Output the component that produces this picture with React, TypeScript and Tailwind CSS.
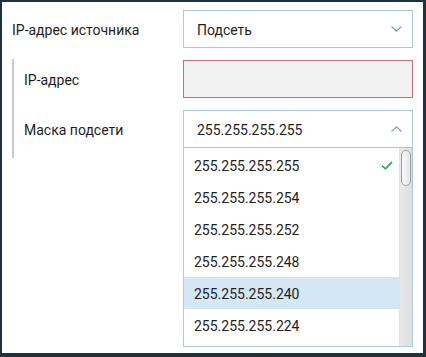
import React from "react";

const MASKS = [
  "255.255.255.255",
  "255.255.255.254",
  "255.255.255.252",
  "255.255.255.248",
  "255.255.255.240",
  "255.255.255.224",
];

function Chevron({ up }: { up?: boolean }) {
  return (
    <svg width="11" height="6" viewBox="0 0 11 6" className="shrink-0">
      <path
        d={up ? "M0.5 5.5 L5.5 0.8 L10.5 5.5" : "M0.5 0.5 L5.5 5.2 L10.5 0.5"}
        fill="none"
        stroke="#8ba5b6"
        strokeWidth="1.2"
      />
    </svg>
  );
}

function Check() {
  return (
    <svg width="12" height="9" viewBox="0 0 12 9" className="shrink-0">
      <path d="M1 4.6 L4.4 7.8 L11 1" fill="none" stroke="#3ea46d" strokeWidth="1.8" />
    </svg>
  );
}

export default function App() {
  const selected = 0;
  const hovered = 4;

  return (
    <div className="w-[426px] h-[357px] overflow-hidden bg-white border-[#1c3242] border-t-2 border-l-2 border-r-[3px] border-b-4 font-[Roboto,sans-serif] text-[14px] text-[#1e1e1e]">
      <div className="flex flex-col pt-2 pl-[10px]">
        {/* source */}
        <div className="flex items-center">
          <div className="w-[171px] pt-[2px]">IP-адрес источника</div>
          <div className="w-[230px] h-[38px] border border-[#a8c9db] flex items-center justify-between pl-[13px] pr-[10px]">
            <span className="pt-[2px]">Подсеть</span>
            <Chevron />
          </div>
        </div>

        {/* subnet group */}
        <div className="mt-[11px] border-l-2 border-[#cbcbcb] pl-[10px] pt-px pb-[10px] flex flex-col gap-3">
          <div className="flex items-center">
            <div className="w-[159px] pt-[2px]">IP-адрес</div>
            <div className="w-[230px] h-[38px] border border-[#da6573] bg-[#f2f2f2]" />
          </div>

          <div className="flex items-center">
            <div className="w-[159px] pt-[2px]">Маска подсети</div>
            <div className="relative w-[230px] h-[38px] border border-[#a8c9db] flex items-center justify-between pl-[13px] pr-[10px]">
              <span className="pt-[2px]">255.255.255.255</span>
              <Chevron up />

              <div className="absolute top-[37px] left-[-1px] w-[230px] h-[199px] bg-white border-x border-b border-[#a8c9db] flex overflow-hidden z-10">
                <div className="flex-1 flex flex-col pt-px">
                  {MASKS.map((m, i) => (
                    <div
                      key={m}
                      className={
                        "h-[32px] shrink-0 flex items-center justify-between pl-[10px] pr-[6px] " +
                        (i === hovered ? "bg-[#d4e7f4]" : "")
                      }
                    >
                      <span className="pt-[2px]">{m}</span>
                      {i === selected && <Check />}
                    </div>
                  ))}
                </div>
                <div className="w-[13px] shrink-0 bg-gradient-to-r from-[#e9e9e9] to-[#dedede] border-l border-[#e2e2e2] pt-[2px] flex justify-center">
                  <div className="w-[10px] h-[36px] rounded-full border border-[#a0a0a0] bg-gradient-to-r from-[#fbfbfb] to-[#e6e6e6]" />
                </div>
              </div>
            </div>
          </div>
        </div>
      </div>
    </div>
  );
}
